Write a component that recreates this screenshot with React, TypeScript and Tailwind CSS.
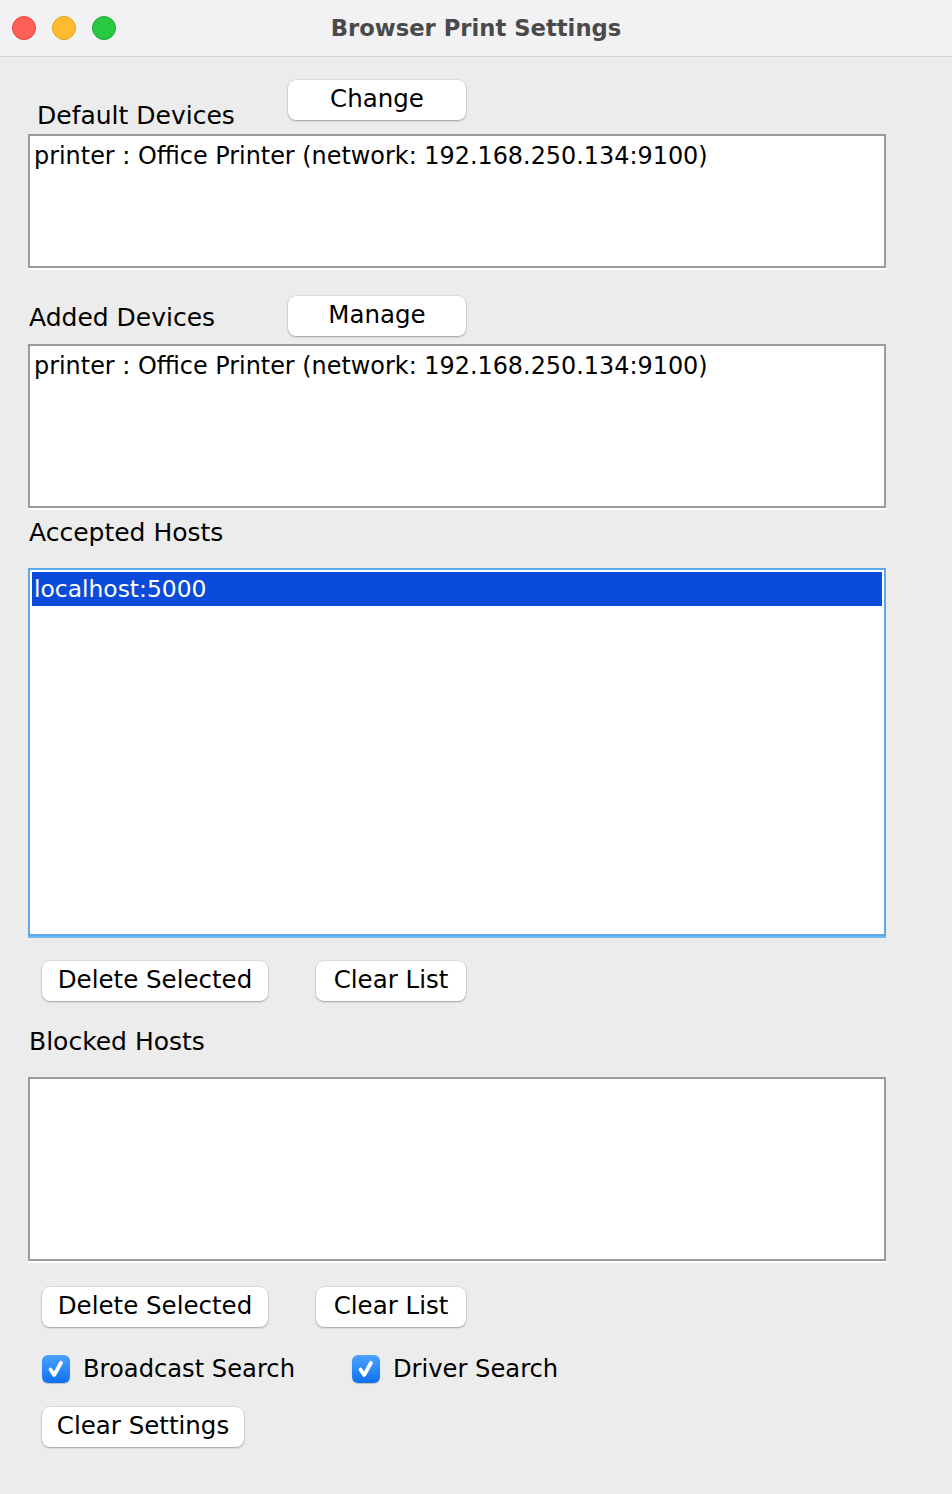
import React from "react";

const font = { fontFamily: '"DejaVu Sans", "Liberation Sans", sans-serif' };

function Btn({ label, w }: { label: string; w: string }) {
  return (
    <button
      className={`h-[40px] ${w} shrink-0 rounded-[8px] bg-white pb-[2px] text-[24.5px] leading-none text-black shadow-[0_1px_2px_rgba(0,0,0,0.28),0_0_0_0.5px_rgba(0,0,0,0.12)]`}
    >
      {label}
    </button>
  );
}

function Box({ h, children }: { h: string; children?: React.ReactNode }) {
  return (
    <div
      className={`${h} w-[858px] border-2 border-[#9b9b9b] bg-white pl-[4px] pt-[6px] text-[23.9px] leading-[28px] text-black shadow-[0_2px_0_#ffffff]`}
    >
      {children}
    </div>
  );
}

function Check({ label }: { label: string }) {
  return (
    <div className="flex items-center gap-[13px]">
      <div className="flex h-[28px] w-[28px] items-center justify-center rounded-[6px] bg-gradient-to-b from-[#4aa3ff] to-[#0a6ff0] shadow-[0_1px_1px_rgba(0,0,0,0.2)]">
        <svg width="20" height="20" viewBox="0 0 20 20" fill="none">
          <path d="M4.5 10.5 L8.2 16 L15 3.8" stroke="white" strokeWidth="3.8" strokeLinecap="round" strokeLinejoin="round" />
        </svg>
      </div>
      <span className="text-[24.2px] leading-[28px] text-black">{label}</span>
    </div>
  );
}

export default function App() {
  const device = "printer : Office Printer (network: 192.168.250.134:9100)";
  return (
    <div className="h-[1494px] w-[952px] overflow-hidden bg-[#ececec]" style={font}>
      {/* Title bar */}
      <div className="relative flex h-[57px] items-center justify-center border-b border-[#d3d3d3] bg-[#f2f2f4]">
        <div className="absolute left-[12px] top-[16px] flex gap-[16px]">
          <div className="h-[24px] w-[24px] rounded-full border border-[#e0443e] bg-[#fe5f57]" />
          <div className="h-[24px] w-[24px] rounded-full border border-[#dea123] bg-[#febc2e]" />
          <div className="h-[24px] w-[24px] rounded-full border border-[#1aab29] bg-[#28c840]" />
        </div>
        <span className="text-[22.7px] font-bold text-[#4a4a4a]">Browser Print Settings</span>
      </div>

      <div className="flex flex-col pl-[28px]">
        {/* Default devices */}
        <div className="mt-[23px] flex h-[50px]">
          <div className="w-[260px] self-end pl-[9px] text-[25px] leading-[28px] text-black">Default Devices</div>
          <Btn label="Change" w="w-[178px]" />
        </div>
        <div className="mt-[4px]">
          <Box h="h-[134px]">{device}</Box>
        </div>

        {/* Added devices */}
        <div className="mt-[28px] flex h-[40px] items-center">
          <div className="w-[260px] pl-[1px] pt-[4px] text-[25px] leading-[28px] text-black">Added Devices</div>
          <Btn label="Manage" w="w-[178px]" />
        </div>
        <div className="mt-[8px]">
          <Box h="h-[164px]">{device}</Box>
        </div>

        {/* Accepted hosts */}
        <div className="mt-[11px] pl-[1px] text-[25px] leading-[28px] text-black">Accepted Hosts</div>
        <div className="mt-[21px] h-[368px] w-[858px] border-2 border-[#5ca8e9] bg-white p-[2px] shadow-[0_2px_0_#6fb8f3]">
          <div className="h-[34px] bg-[#0a4bd9] pl-[2px] text-[23.4px] leading-[34px] text-white">localhost:5000</div>
        </div>
        <div className="mt-[25px] flex gap-[48px] pl-[14px]">
          <Btn label="Delete Selected" w="w-[226px]" />
          <Btn label="Clear List" w="w-[150px]" />
        </div>

        {/* Blocked hosts */}
        <div className="mt-[27px] pl-[1px] text-[25px] leading-[28px] text-black">Blocked Hosts</div>
        <div className="mt-[21px]">
          <Box h="h-[184px]" />
        </div>
        <div className="mt-[26px] flex gap-[48px] pl-[14px]">
          <Btn label="Delete Selected" w="w-[226px]" />
          <Btn label="Clear List" w="w-[150px]" />
        </div>

        {/* Options */}
        <div className="mt-[28px] flex gap-[57px] pl-[14px]">
          <Check label="Broadcast Search" />
          <Check label="Driver Search" />
        </div>
        <div className="mt-[24px] pl-[14px]">
          <Btn label="Clear Settings" w="w-[202px]" />
        </div>
      </div>
    </div>
  );
}
